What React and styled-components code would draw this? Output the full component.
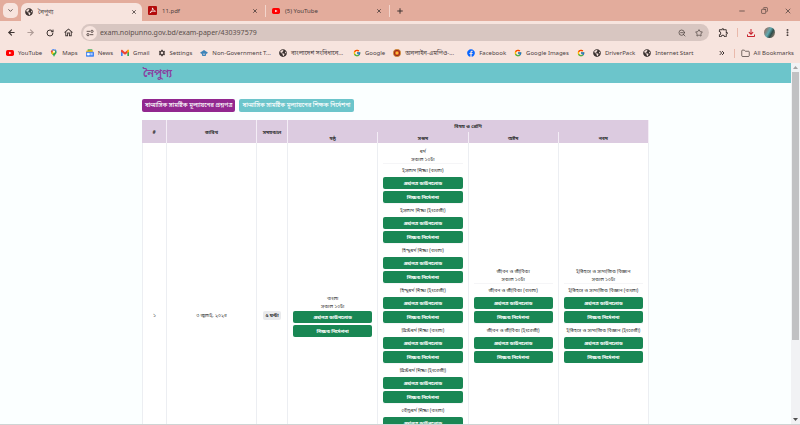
import React from 'react';
import styled, { createGlobalStyle } from 'styled-components';
import {
  ArrowLeft, ArrowRight, ChevronDown, ChevronsRight, Copy, Folder,
  Minus, Plus, RotateCw, Star, X, ZoomOut, EllipsisVertical,
} from 'lucide-react';
import { FcGoogle } from 'react-icons/fc';
import { FaFacebook, FaGlobeAmericas } from 'react-icons/fa';
import { MdSettings, MdOutlineHome, MdOutlineExtension, MdOutlineFileDownload } from 'react-icons/md';

const GlobalStyle = createGlobalStyle`
  * { box-sizing: border-box; }
  body {
    margin: 0;
    overflow: hidden;
    font-family: 'Noto Sans', 'Noto Sans Bengali', sans-serif;
    font-size: 6px;
    color: #4b403e;
  }
  button, input { font: inherit; color: inherit; border: 0; padding: 0; background: none; }
  a { color: inherit; text-decoration: none; }
  svg { display: block; flex: none; }
`;

const Window = styled.div`
  display: flex;
  flex-direction: column;
  height: 100vh;
  background: #f7e4de;
`;

const TabStrip = styled.div`
  display: flex;
  align-items: center;
  flex: none;
  height: 21px;
  padding-left: 3px;
  background: #e3ac9c;
`;

const TabSearch = styled.button`
  display: flex;
  align-items: center;
  justify-content: center;
  width: 15px;
  height: 15px;
  border-radius: 5px;
  background: #f7e4de;
`;

const Tab = styled.div`
  display: flex;
  align-items: center;
  gap: 5px;
  width: ${({ $active }) => $active ? '121px' : '124px'};
  height: ${({ $active }) => $active ? '18px' : '12px'};
  margin-left: ${({ $active }) => $active ? '3px' : 0};
  margin-top: ${({ $active }) => $active ? '3px' : 0};
  padding: 0 ${({ $active }) => $active ? '5px 0 4px' : '7px 0 6px'};
  border-radius: ${({ $active }) => $active ? '6px 6px 0 0' : 0};
  border-right: ${({ $active }) => $active ? 0 : '1px solid #f3d5cc'};
  background: ${({ $active }) => $active ? '#f7e4de' : 'transparent'};
`;

const TabTitle = styled.button`
  flex: 1;
  text-align: left;
  line-height: 12px;
`;

const IconButton = styled.button`
  display: flex;
  align-items: center;
  justify-content: center;
  flex: none;
  width: ${({ $width }) => $width || 19}px;
  height: 15px;
  color: ${({ $color }) => $color || '#3d3331'};
`;

const WindowControls = styled.div`
  display: flex;
  margin-left: auto;
`;

const Toolbar = styled.div`
  display: flex;
  align-items: center;
  flex: none;
  height: 23px;
  padding-left: 2px;
`;

const AddressBar = styled.div`
  display: flex;
  align-items: center;
  flex: 1;
  height: 17px;
  margin-left: 3px;
  padding: 0 2px;
  border-radius: 9px;
  background: #d8c6c1;
`;

const SiteInfo = styled.button`
  display: flex;
  align-items: center;
  justify-content: center;
  width: 14px;
  height: 14px;
  border-radius: 7px;
  background: #f7e4de;
`;

const Address = styled.input`
  flex: 1;
  min-width: 0;
  height: 14px;
  margin-left: 3px;
  font-size: 7px;
  color: #5c4f4c;
  outline: 0;
`;

const Divider = styled.span`
  width: 1px;
  height: 9px;
  background: #e9b9ab;
`;

const Avatar = styled.span`
  width: 11px;
  height: 11px;
  border-radius: 50%;
  background: linear-gradient(120deg, #8a7c74 20%, #5fa9b0 45%, #2f4d4a 65%, #b98f79);
`;

const Bookmarks = styled.nav`
  display: flex;
  align-items: center;
  flex: none;
  gap: 8px;
  height: 18px;
  margin-bottom: 1px;
  padding: 0 6px;
  white-space: nowrap;
`;

const Bookmark = styled.a`
  display: flex;
  align-items: center;
  gap: 4px;
  min-width: ${({ $long }) => $long ? '66px' : 0};
  line-height: 12px;
`;

const BookmarksEnd = styled.div`
  display: flex;
  align-items: center;
  gap: 6px;
  margin-left: auto;
`;

const Viewport = styled.div`
  display: flex;
  flex: 1;
  min-height: 0;
  border-bottom: 1px solid #cfd4d4;
`;

const Page = styled.div`
  flex: 1;
  min-width: 0;
  overflow: hidden;
  background: #fbffff;
  color: #333;
`;

const Header = styled.header`
  height: 20px;
  background: #6cc5cb;
`;

const Container = styled.div`
  max-width: 507px;
  margin: 0 auto;
`;

const Brand = styled.a`
  display: block;
  padding-left: 1px;
  font-size: 11px;
  font-weight: 600;
  line-height: 20px;
  && { color: #8a3fa0; }
`;

const Switcher = styled.div`
  display: flex;
  gap: 4px;
  padding: 16px 0 8px;
`;

const SwitchButton = styled.button`
  height: 13px;
  padding: 0 3px;
  border-radius: 2px;
  background: ${({ $active }) => $active ? '#92278f' : '#6cc5cb'};
  color: #fff;
  font-size: 6px;
  font-weight: 500;
  line-height: 13px;
`;

const Table = styled.table`
  width: 100%;
  table-layout: fixed;
  border-collapse: separate;
  border-spacing: 0;
  background: #fff;
  font-size: 5px;
  text-align: center;
`;

const Col = styled.col`
  width: ${({ $width }) => $width}px;
`;

const HeadCell = styled.th`
  height: ${({ $short }) => $short ? '11px' : '12px'};
  padding: 0;
  border-right: 1px solid #f4edf6;
  background: #dccbe0;
  line-height: 8px;
`;

const Cell = styled.td`
  padding: 4px 5px;
  border-right: 1px solid #eceef2;
  vertical-align: middle;

  &:first-child { border-left: 1px solid #eceef2; }
`;

const Duration = styled.span`
  display: inline-block;
  padding: 0 2px;
  border-radius: 2px;
  background: #e9eaec;
  font-weight: 700;
  line-height: 9px;
  white-space: nowrap;
`;

const Line = styled.div`
  line-height: 8px;
  white-space: nowrap;
`;

const PaperTitle = styled.div`
  height: 14px;
  border-top: 1px solid #f5f5f7;
  line-height: 12px;
  white-space: nowrap;
`;

const PaperButton = styled.button`
  display: block;
  width: 100%;
  height: 12px;
  border-radius: 2px;
  background: #198754;
  color: #fff;
  font-weight: 700;
  line-height: 12px;

  & + & { margin-top: 2px; }
`;

const Untitled = styled.div`
  padding-top: 1px;
`;

const Scrollbar = styled.div`
  display: flex;
  flex-direction: column;
  align-items: center;
  width: 9px;
  background: #f1f2f4;
`;

const ScrollArrow = styled.button`
  display: flex;
  align-items: center;
  justify-content: center;
  width: 9px;
  height: 9px;
`;

const Track = styled.div`
  flex: 1;
  width: 7px;
`;

const Thumb = styled.div`
  height: 78%;
  background: #c1c1c3;
`;

const YouTubeIcon = () => (
  <svg width="8" height="8" viewBox="0 0 24 24">
    <rect x="0" y="3" width="24" height="18" rx="5" fill="#f00" />
    <path d="M9.5 8v8l7-4z" fill="#fff" />
  </svg>
);

const PdfIcon = () => (
  <svg width="9" height="9" viewBox="0 0 24 24">
    <rect width="24" height="24" rx="3" fill="#b30b0b" />
    <path d="M12 5c2 5 4 9 8 9-4-1-11 0-15 4 4-2 8-8 7-13z" fill="none" stroke="#fff" strokeWidth="2" />
  </svg>
);

const MapsIcon = () => (
  <svg width="8" height="8" viewBox="0 0 24 24">
    <path d="M12 0a9 9 0 0 0-7 3l5 5z" fill="#4285f4" />
    <path d="M5 3a8 8 0 0 0-1 10l6-6z" fill="#ea4335" />
    <path d="M12 0c5 0 8 4 8 8L4 13 14 2z" fill="#4285f4" />
    <path d="M4 13 15 4l5 5c0 6-6 8-8 15-1-5-5-7-8-11z" fill="#34a853" />
    <path d="M4 12l8-9 4 5-9 9z" fill="#fbbc04" />
    <circle cx="12" cy="8" r="3" fill="#fff" />
  </svg>
);

const NewsIcon = () => (
  <svg width="8" height="8" viewBox="0 0 24 24">
    <path d="M5 1h14v12H5z" fill="#34a853" />
    <path d="M1 5l18-2 2 10H1z" fill="#fbbc04" />
    <rect y="8" width="24" height="15" rx="2" fill="#4285f4" />
    <path d="M4 13h6v5H4zM13 13h7M13 17h7" fill="#fff" stroke="#fff" strokeWidth="2" />
  </svg>
);

const GmailIcon = () => (
  <svg width="8" height="8" viewBox="0 0 24 24">
    <path d="M0 6v15h5V10z" fill="#4285f4" />
    <path d="M24 6v15h-5V10z" fill="#34a853" />
    <path d="M0 5c0-3 3-3 5-1l7 6 7-6c2-2 5-2 5 1v3l-12 9L0 8z" fill="#ea4335" />
    <path d="M19 4c2-2 5-2 5 1v3l-5 4z" fill="#fbbc04" />
  </svg>
);

const GovIcon = () => (
  <svg width="8" height="8" viewBox="0 0 24 24">
    <path d="M0 11 12 3l12 8-4 3H4z" fill="#3d83b8" />
    <path d="M5 13h14l-2 8H7z" fill="#3d83b8" />
    <path d="M9 14h6l-3 5z" fill="#f7e4de" />
  </svg>
);

const SealIcon = () => (
  <svg width="8" height="8" viewBox="0 0 24 24">
    <circle cx="12" cy="12" r="11" fill="#9d2b1c" stroke="#d9a13b" strokeWidth="2" />
    <circle cx="12" cy="12" r="6" fill="#f47b20" />
    <circle cx="12" cy="12" r="3" fill="#f8d34b" />
  </svg>
);

const TuneIcon = () => (
  <svg width="8" height="8" viewBox="0 0 24 24" fill="none" stroke="#4b403e" strokeWidth="2.6">
    <path d="M2 7h10M12 17h10" />
    <circle cx="18" cy="7" r="3.4" />
    <circle cx="6" cy="17" r="3.4" />
  </svg>
);

const Arrow = ({ d, fill }) => (
  <svg width="5" height="3" viewBox="0 0 10 6"><path d={d} fill={fill} /></svg>
);

const globe = <FaGlobeAmericas size={8} color="#3b3230" />;

const bookmarks = [
  { icon: <YouTubeIcon />, label: 'YouTube' },
  { icon: <MapsIcon />, label: 'Maps' },
  { icon: <NewsIcon />, label: 'News' },
  { icon: <GmailIcon />, label: 'Gmail' },
  { icon: <MdSettings size={8} />, label: 'Settings' },
  { icon: <GovIcon />, label: 'Non-Government T...', long: true },
  { icon: globe, label: 'বাংলাদেশ সংবিধানে...', long: true },
  { icon: <FcGoogle size={8} />, label: 'Google' },
  { icon: <SealIcon />, label: 'অনলাইন-এমপিও-...', long: true },
  { icon: <FaFacebook size={8} color="#0866ff" />, label: 'Facebook' },
  { icon: <FcGoogle size={8} />, label: 'Google Images' },
  { icon: <FcGoogle size={8} />, label: '' },
  { icon: globe, label: 'DriverPack' },
  { icon: globe, label: 'Internet Start' },
];

const subjects = [
  { name: 'বাংলা', papers: [''] },
  {
    name: 'ধর্ম',
    papers: [
      'ইসলাম শিক্ষা (বাংলা)', 'ইসলাম শিক্ষা (ইংরেজী)',
      'হিন্দুধর্ম শিক্ষা (বাংলা)', 'হিন্দুধর্ম শিক্ষা (ইংরেজী)',
      'খ্রিস্টধর্ম শিক্ষা (বাংলা)', 'খ্রিস্টধর্ম শিক্ষা (ইংরেজী)',
      'বৌদ্ধধর্ম শিক্ষা (বাংলা)', 'বৌদ্ধধর্ম শিক্ষা (ইংরেজী)',
    ],
  },
  { name: 'জীবন ও জীবিকা', papers: ['জীবন ও জীবিকা (বাংলা)', 'জীবন ও জীবিকা (ইংরেজী)'] },
  {
    name: 'ইতিহাস ও সামাজিক বিজ্ঞান',
    papers: ['ইতিহাস ও সামাজিক বিজ্ঞান (বাংলা)', 'ইতিহাস ও সামাজিক বিজ্ঞান (ইংরেজী)'],
  },
];

const Paper = ({ title }) => {
  const buttons = (
    <>
      <PaperButton>প্রশ্নপত্র ডাউনলোড</PaperButton>
      <PaperButton>শিক্ষক নির্দেশনা</PaperButton>
    </>
  );
  if (!title) return <Untitled>{buttons}</Untitled>;
  return (
    <div>
      <PaperTitle>{title}</PaperTitle>
      {buttons}
    </div>
  );
};

const BrowserTab = ({ icon, title, active }) => (
  <Tab $active={active}>
    {icon}
    <TabTitle>{title}</TabTitle>
    <IconButton $width={6} aria-label="Close tab"><X size={6} strokeWidth={3} /></IconButton>
  </Tab>
);

const ExamTable = () => (
  <Table>
    <colgroup>
      <Col $width={25} />
      <Col $width={90} />
      <Col $width={31} />
      <col /><col /><col /><col />
    </colgroup>
    <thead>
      <tr>
        <HeadCell rowSpan={2}>#</HeadCell>
        <HeadCell rowSpan={2}>তারিখ</HeadCell>
        <HeadCell rowSpan={2}>সময়কাল</HeadCell>
        <HeadCell colSpan={4}>বিষয় ও শ্রেণি</HeadCell>
      </tr>
      <tr>
        {['ষষ্ঠ', 'সপ্তম', 'অষ্টম', 'নবম'].map(grade => (
          <HeadCell key={grade} $short>{grade}</HeadCell>
        ))}
      </tr>
    </thead>
    <tbody>
      <tr>
        <Cell>১</Cell>
        <Cell>৩ জুলাই, ২০২৪</Cell>
        <Cell><Duration>৫ ঘন্টা</Duration></Cell>
        {subjects.map(({ name, papers }) => (
          <Cell key={name}>
            <Line>{name}</Line>
            <Line>সকাল ১০টা</Line>
            {papers.map(title => <Paper key={title} title={title} />)}
          </Cell>
        ))}
      </tr>
    </tbody>
  </Table>
);

const App = () => (
  <Window>
    <GlobalStyle />
    <TabStrip>
      <TabSearch aria-label="Search tabs"><ChevronDown size={7} strokeWidth={3} /></TabSearch>
      <BrowserTab active icon={globe} title="নৈপুণ্য" />
      <BrowserTab icon={<PdfIcon />} title="11.pdf" />
      <BrowserTab icon={<YouTubeIcon />} title="(5) YouTube" />
      <IconButton aria-label="New tab"><Plus size={8} strokeWidth={3} /></IconButton>
      <WindowControls>
        <IconButton $width={23} aria-label="Minimize"><Minus size={8} /></IconButton>
        <IconButton $width={23} aria-label="Restore"><Copy size={7} style={{ transform: 'scaleX(-1)' }} /></IconButton>
        <IconButton $width={24} aria-label="Close"><X size={8} /></IconButton>
      </WindowControls>
    </TabStrip>
    <Toolbar>
      <IconButton aria-label="Back"><ArrowLeft size={9} strokeWidth={3} /></IconButton>
      <IconButton $color="#b09d98" aria-label="Forward"><ArrowRight size={9} strokeWidth={3} /></IconButton>
      <IconButton aria-label="Reload"><RotateCw size={8} strokeWidth={3} /></IconButton>
      <IconButton aria-label="Home"><MdOutlineHome size={11} /></IconButton>
      <AddressBar>
        <SiteInfo aria-label="Site information"><TuneIcon /></SiteInfo>
        <Address aria-label="Address" defaultValue="exam.noipunno.gov.bd/exam-paper/430397579" />
        <IconButton $width={17} aria-label="Zoom"><ZoomOut size={8} /></IconButton>
        <IconButton $width={17} aria-label="Bookmark"><Star size={8} /></IconButton>
      </AddressBar>
      <IconButton $width={28} aria-label="Extensions"><MdOutlineExtension size={11} /></IconButton>
      <Divider />
      <IconButton $width={26} $color="#c8202c" aria-label="Downloads"><MdOutlineFileDownload size={12} /></IconButton>
      <Avatar />
      <IconButton $width={25} aria-label="Menu"><EllipsisVertical size={9} strokeWidth={3} /></IconButton>
    </Toolbar>
    <Bookmarks>
      {bookmarks.map(({ icon, label, long }, i) => (
        <Bookmark key={i} href="#" $long={long} aria-label={label || 'Google'}>{icon}{label}</Bookmark>
      ))}
      <BookmarksEnd>
        <IconButton $width={12} aria-label="More bookmarks"><ChevronsRight size={8} strokeWidth={3} /></IconButton>
        <Divider />
        <Bookmark href="#"><Folder size={9} />All Bookmarks</Bookmark>
      </BookmarksEnd>
    </Bookmarks>
    <Viewport>
      <Page>
        <Header>
          <Container><Brand href="#">নৈপুণ্য</Brand></Container>
        </Header>
        <Container as="main">
          <Switcher>
            <SwitchButton $active>ষাণ্মাসিক সামষ্টিক মূল্যায়নের প্রশ্নপত্র</SwitchButton>
            <SwitchButton>ষাণ্মাসিক সামষ্টিক মূল্যায়নের শিক্ষক নির্দেশনা</SwitchButton>
          </Switcher>
          <ExamTable />
        </Container>
      </Page>
      <Scrollbar>
        <ScrollArrow aria-label="Scroll up"><Arrow d="M0 6 5 0l5 6z" fill="#a3a3a3" /></ScrollArrow>
        <Track><Thumb /></Track>
        <ScrollArrow aria-label="Scroll down"><Arrow d="M0 0h10L5 6z" fill="#505050" /></ScrollArrow>
      </Scrollbar>
    </Viewport>
  </Window>
);

export default App;
